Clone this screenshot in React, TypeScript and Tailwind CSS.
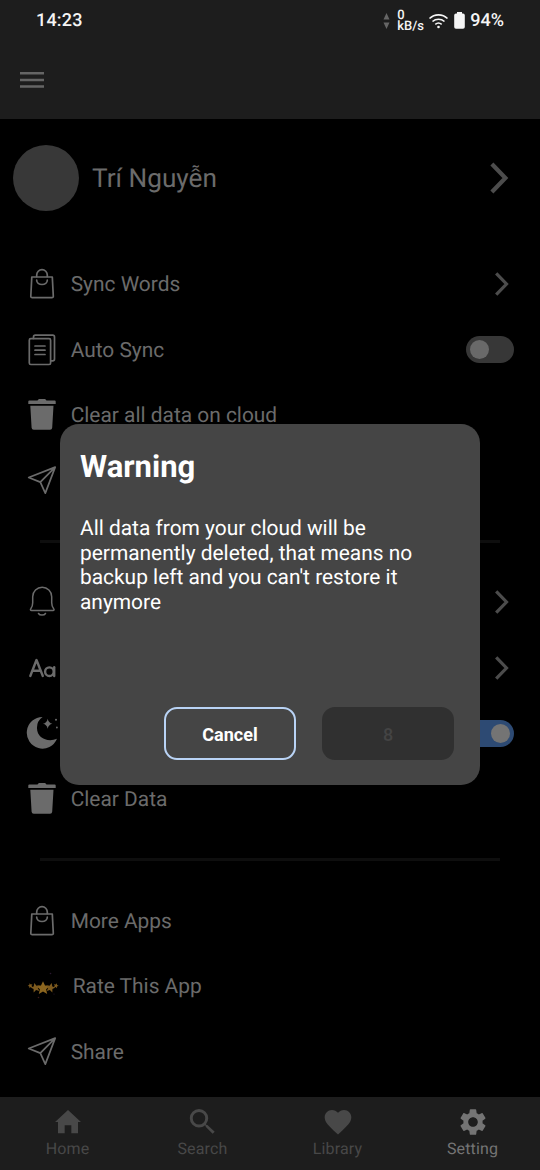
import React from "react";

type IconProps = { className?: string };

const line = {
  fill: "none",
  stroke: "currentColor",
  strokeWidth: 1.7,
  strokeLinecap: "round" as const,
  strokeLinejoin: "round" as const,
};

function BagIcon() {
  return (
    <svg width="32" height="36" viewBox="0 0 32 36" {...line}>
      <path d="M5.800 11h20.500l1 19.200a1.400 1.400 0 0 1-1.400 1.500H6.200a1.400 1.400 0 0 1-1.400-1.500z" />
      <path d="M10.700 10.500V9a5.300 5.300 0 0 1 10.600 0v1.500" />
      <path d="M10.700 14.200a5.300 4.300 0 0 0 10.600 0" />
    </svg>
  );
}

function DocsIcon() {
  return (
    <svg width="32" height="36" viewBox="0 0 32 36" {...line}>
      <rect x="3.300" y="6.700" width="21.300" height="25.800" rx="1.500" />
      <path d="M7.500 6.500V5a1.800 1.800 0 0 1 1.800-1.800h17.400A1.800 1.800 0 0 1 28.500 5v22a1.800 1.800 0 0 1-1.800 1.800H25" />
      <path d="M9 14h10M9 18.200h10M9 22.500h10" />
    </svg>
  );
}

function TrashIcon() {
  return (
    <svg width="32" height="36" viewBox="0 0 32 36" fill="currentColor">
      <path d="M2.300 4.500q0-1 1-1h8.200L12.900 2h6.200l1.400 1.500h8.200q1 0 1 1v2.600H2.300zM4.300 8.700h23.200l-1.300 22a2.200 2.200 0 0 1-2.200 2H7.800a2.200 2.200 0 0 1-2.200-2z" />
    </svg>
  );
}

function PlaneIcon() {
  return (
    <svg width="32" height="36" viewBox="0 0 32 36" {...line}>
      <path d="M2.700 14.500 29.200 4.100 19.300 30.100l-5-11z M14.300 19.100 29.200 4.100" />
    </svg>
  );
}

function BellIcon() {
  return (
    <svg width="32" height="36" viewBox="0 0 32 36" {...line} strokeWidth={1.5}>
      <path d="M5.500 26.500c-1 0-1.400-1-.7-1.700 1.400-1.700 1.900-3 1.900-6v-6a9.500 9.500 0 0 1 19 0v6c0 3 .6 4.300 2 6 .7.700.3 1.700-.7 1.700z" />
      <path d="M12.500 29.500a3.800 2.600 0 0 0 7 0" />
    </svg>
  );
}

function FontIcon() {
  return (
    <svg width="32" height="36" viewBox="0 0 32 36" {...line} strokeWidth={2.400}>
      <path d="M4.300 26 10.500 10 16.800 26M6.500 20.800h8" />
      <circle cx="23.400" cy="21.700" r="4.300" />
      <path d="M28.200 17.300V26" />
    </svg>
  );
}

function MoonIcon() {
  return (
    <svg className="-ml-px" width="34" height="36" viewBox="0 0 34 36" fill="currentColor">
      <path d="M17.600 2A15.700 15.800 0 1 0 32 23.800C22.500 27.800 12 22.800 12 13.300A13 13 0 0 1 17.600 2z" />
      <path d="M22.700 3.800q.8 4.200 4.700 5-3.900.8-4.700 5-.8-4.200-4.700-5 3.900-.8 4.700-5z" />
      <circle cx="31" cy="4.800" r="1" />
      <circle cx="31.900" cy="12.500" r=".9" />
    </svg>
  );
}

function StarsIcon() {
  const star = "M0-5 1.500-1.800 5-1.500 2.300.9 3.100 4.400 0 2.500-3.100 4.400-2.300.9-5-1.500-1.500-1.800z";
  return (
    <svg width="34" height="36" viewBox="0 0 34 36">
      <g fill="#7d5a1e">
        <path d={star} transform="translate(17 20) scale(1.350)" fill="#8b651f" />
        <path d={star} transform="translate(9.500 19.700) rotate(-14) scale(.95)" />
        <path d={star} transform="translate(24.500 19.700) rotate(14) scale(.95)" />
        <path d={star} transform="translate(4.300 17.700) rotate(-18) scale(.5)" />
        <path d={star} transform="translate(30 17.700) rotate(18) scale(.5)" />
      </g>
      <circle cx="24.500" cy="5.500" r=".8" fill="#2a1830" />
      <circle cx="12.500" cy="29.500" r=".8" fill="#3a1818" />
      <circle cx="28" cy="26" r=".6" fill="#2a1830" />
    </svg>
  );
}

function Chevron({ className }: IconProps) {
  return (
    <svg className={className} viewBox="0 0 16 24" fill="none" stroke="currentColor" strokeWidth="3.200">
      <path d="M2.200 1.300 12.500 12 2.200 22.700" />
    </svg>
  );
}

function Toggle({ on = false }: { on?: boolean }) {
  return on ? (
    <span className="flex h-[27px] w-12 items-center justify-end rounded-full bg-[#2d4a73] p-1">
      <span className="size-[19px] rounded-full bg-[#747474]" />
    </span>
  ) : (
    <span className="flex h-[27px] w-12 items-center rounded-full bg-[#373737] p-1">
      <span className="size-[19px] rounded-full bg-[#696969]" />
    </span>
  );
}

type RowProps = { icon: React.ReactNode; label?: string; end?: React.ReactNode };

function Row({ icon, label, end }: RowProps) {
  return (
    <div className="flex h-[65.500px] items-center pr-[26px] pl-[26px] text-[#6b6b6b]">
      {icon}
      {label && <span className="ml-[12.700px] pt-[2px] text-[20.900px] leading-6 whitespace-nowrap">{label}</span>}
      <span className="ml-auto text-[#4c4c4c]">{end}</span>
    </div>
  );
}

const arrow = <Chevron className="mr-1 h-[24px] w-4" />;

function Divider() {
  return (
    <div className="flex h-[56.250px] items-center px-10">
      <div className="h-[3px] w-full bg-[#0e0e0e]" />
    </div>
  );
}

function StatusBar() {
  return (
    <div className="flex h-[41px] items-center pl-9 text-[#f5f5f5]">
      <span className="text-[18px] font-medium tracking-[0.200px]">14:23</span>
      <svg className="ml-auto" width="7" height="16" viewBox="0 0 7 16" fill="#666">
        <path d="M3.500 0 6.500 6.500h-6zM3.500 16l-3-6.500h6z" />
      </svg>
      <span className="ml-[7px] flex w-[27px] flex-col text-[13px] leading-[11px] font-medium whitespace-nowrap">
        <span>0</span>
        <span>kB/s</span>
      </span>
      <svg className="ml-1" width="21" height="16" viewBox="0 0 21 16" fill="none" stroke="currentColor" strokeWidth="1.600">
        <path d="M1.500 5.500a13 13 0 0 1 18 0M4.500 8.500a9 9 0 0 1 12 0M7.300 11.300a5 5 0 0 1 6.400 0" />
        <circle cx="10.500" cy="14" r="1.300" fill="currentColor" stroke="none" />
      </svg>
      <svg className="ml-[5px]" width="11" height="17" viewBox="0 0 11 17" fill="currentColor">
        <path d="M3 0h5v1.500h1a1.800 1.800 0 0 1 1.800 1.800V15A1.800 1.800 0 0 1 9 16.800H2A1.800 1.800 0 0 1 .2 15V3.300A1.800 1.800 0 0 1 2 1.500h1z" />
      </svg>
      <span className="mr-9 ml-[5px] text-[18px] font-medium">94%</span>
    </div>
  );
}

function NavItem({ d, label, active = false }: { d: string; label: string; active?: boolean }) {
  return (
    <div className={active ? "flex flex-1 flex-col items-center text-[#747474]" : "flex flex-1 flex-col items-center text-[#484848]"}>
      <svg width="32" height="32" viewBox="0 0 24 24" fill="currentColor">
        <path d={d} />
      </svg>
      <span className="mt-px text-[16px] leading-5 tracking-[0.150px]">{label}</span>
    </div>
  );
}

const navPaths = {
  home: "M9.500 20.500v-6h5v6h5v-8.500h2.200L12 3 2.300 12h2.200v8.500z",
  search:
    "M15.300 14.200h-.6l-.5-.5A6.900 6.900 0 0 0 15.900 9.200 6.900 6.900 0 1 0 9 16.100c1.700 0 3.300-.6 4.500-1.700l.5.500v.7l5.200 5.200 1.600-1.500zM9 13.900a4.700 4.700 0 1 1 0-9.400 4.700 4.700 0 0 1 0 9.400z",
  heart:
    "M12 21.350l-1.450-1.320C5.400 15.360 2 12.280 2 8.500 2 5.420 4.420 3 7.500 3c1.740 0 3.410.81 4.500 2.090C13.090 3.810 14.760 3 16.500 3 19.580 3 22 5.420 22 8.500c0 3.780-3.400 6.860-8.550 11.540L12 21.350z",
  gear: "M19.140 12.940c.04-.3.06-.61.06-.94 0-.32-.02-.64-.07-.94l2.030-1.580a.49.49 0 0 0 .12-.61l-1.920-3.320a.488.488 0 0 0-.59-.22l-2.390.96c-.5-.38-1.030-.7-1.620-.94l-.36-2.540a.484.484 0 0 0-.48-.41h-3.840c-.24 0-.43.17-.47.41l-.36 2.540c-.59.24-1.130.57-1.620.94l-2.390-.96c-.22-.08-.47 0-.59.22L2.740 8.870c-.12.21-.08.47.12.61l2.030 1.580c-.05.3-.09.63-.09.94s.02.64.07.94l-2.030 1.580a.49.49 0 0 0-.12.61l1.920 3.320c.12.22.37.29.59.22l2.390-.96c.5.38 1.030.7 1.620.94l.36 2.540c.05.24.24.41.48.41h3.840c.24 0 .44-.17.47-.41l.36-2.540c.59-.24 1.130-.56 1.620-.94l2.390.96c.22.08.47 0 .59-.22l1.920-3.320c.12-.22.07-.47-.12-.61l-2.010-1.580zM12 15.600c-1.980 0-3.600-1.620-3.600-3.600s1.620-3.600 3.600-3.600 3.600 1.620 3.600 3.600-1.620 3.600-3.600 3.600z",
};

function WarningDialog() {
  return (
    <div className="absolute inset-0 flex justify-center pt-[424.400px]">
      <div className="flex h-[361px] w-[420px] flex-col rounded-[19px] bg-[#454545] px-5 pt-[25px] text-white">
        <h2 className="text-[31px] leading-9 font-bold">Warning</h2>
        <p className="mt-[32px] text-[20.900px] leading-[24.500px] whitespace-nowrap">
          All data from your cloud will be
          <br />
          permanently deleted, that means no
          <br />
          backup left and you can't restore it
          <br />
          anymore
        </p>
        <div className="mt-auto mr-[6px] mb-[25px] flex justify-end gap-[26px]">
          <button className="h-[53px] w-[132px] rounded-[13px] border-2 border-[#b9d3f5] pt-[2px] text-[18px] font-bold">Cancel</button>
          <button className="h-[53px] w-[132px] rounded-[13px] bg-[#303030] pt-[2px] text-[18px] font-medium text-[#444444]">8</button>
        </div>
      </div>
    </div>
  );
}

export default function App() {
  return (
    <div className="relative flex h-[1170px] w-[540px] flex-col overflow-hidden bg-black font-[Roboto,sans-serif] [text-rendering:geometricPrecision]">
      <header className="h-[119px] shrink-0 bg-[#1d1d1d]">
        <StatusBar />
        <svg className="mt-[30px] ml-5" width="24" height="18" viewBox="0 0 24 18" fill="none" stroke="#656565" strokeWidth="2.500">
          <path d="M0 2.200h24M0 8.900h24M0 15.500h24" />
        </svg>
      </header>
      <main className="flex-1">
        <div className="flex h-[118px] items-center pl-[13px] text-[#6b6b6b]">
          <span className="size-[66px] rounded-full bg-[#383838]" />
          <span className="ml-[13px] pt-[3px] text-[26.200px]">Trí Nguyễn</span>
          <Chevron className="mr-[30px] ml-auto h-8 w-[21px] text-[#4c4c4c]" />
        </div>
        <section className="mt-[14.250px]">
          <Row icon={<BagIcon />} label="Sync Words" end={arrow} />
          <Row icon={<DocsIcon />} label="Auto Sync" end={<Toggle />} />
          <Row icon={<TrashIcon />} label="Clear all data on cloud" />
          <Row icon={<PlaneIcon />} />
        </section>
        <Divider />
        <section>
          <Row icon={<BellIcon />} end={arrow} />
          <Row icon={<FontIcon />} end={arrow} />
          <Row icon={<MoonIcon />} end={<Toggle on />} />
          <Row icon={<TrashIcon />} label="Clear Data" />
        </section>
        <Divider />
        <section>
          <Row icon={<BagIcon />} label="More Apps" />
          <Row icon={<StarsIcon />} label="Rate This App" />
          <Row icon={<PlaneIcon />} label="Share" />
        </section>
      </main>
      <nav className="flex h-[73px] shrink-0 bg-[#1d1d1d] pt-[9px]">
        <NavItem d={navPaths.home} label="Home" />
        <NavItem d={navPaths.search} label="Search" />
        <NavItem d={navPaths.heart} label="Library" />
        <NavItem d={navPaths.gear} label="Setting" active />
      </nav>
      <WarningDialog />
    </div>
  );
}
